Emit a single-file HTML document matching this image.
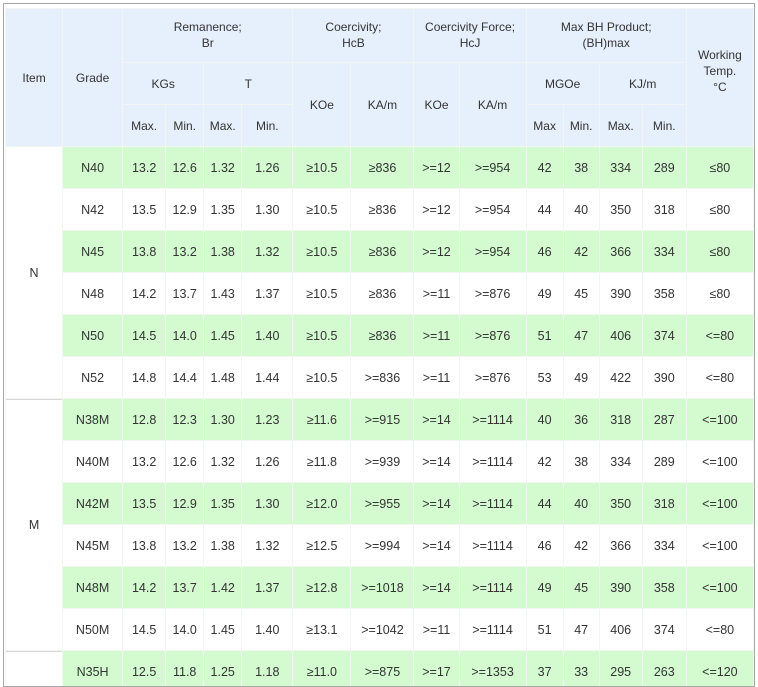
<!DOCTYPE html>
<html><head><style>
body{margin:0;background:#fff;width:758px;height:687px;overflow:hidden;font-family:"Liberation Sans",Arial,sans-serif;color:#333}
.box{position:absolute;left:3px;top:3px;width:750px;height:682px;border:1px solid #a8a8a8;overflow:hidden}
table{position:absolute;left:1px;top:4px;border-collapse:separate;border-spacing:1px;table-layout:fixed;width:749px;background:#f2f6f2}
td{text-align:center;vertical-align:middle;padding:0;font-size:12px;height:41px;overflow:hidden;white-space:nowrap}
.h td{background:#e6f0fc;line-height:16px}
tr.g td{background:#d3fbcf}
tr.w td{background:#fff}
td.it{background:#fff !important}
.d td{font-size:12.5px}
</style></head><body><div class="box">
<table>
<colgroup><col style="width:56px"><col style="width:59px"><col style="width:42px"><col style="width:37px"><col style="width:37px"><col style="width:50px"><col style="width:57px"><col style="width:62px"><col style="width:44px"><col style="width:66px"><col style="width:36px"><col style="width:35px"><col style="width:42px"><col style="width:43px"><col style="width:66px"></colgroup>
<tr class="h"><td rowspan="3">Item</td><td rowspan="3">Grade</td><td colspan="4" style="height:53px;vertical-align:top;padding-top:10px;height:43px">Remanence;<br>Br</td><td colspan="2" style="vertical-align:top;padding-top:10px">Coercivity;<br>HcB</td><td colspan="2" style="vertical-align:top;padding-top:10px">Coercivity Force;<br>HcJ</td><td colspan="4" style="vertical-align:top;padding-top:10px">Max BH Product;<br>(BH)max</td><td rowspan="3" style="padding-bottom:14px">Working<br>Temp.<br>°C</td></tr>
<tr class="h"><td colspan="2">KGs</td><td colspan="2">T</td><td rowspan="2">KOe</td><td rowspan="2">KA/m</td><td rowspan="2">KOe</td><td rowspan="2">KA/m</td><td colspan="2">MGOe</td><td colspan="2">KJ/m</td></tr>
<tr class="h"><td>Max.</td><td>Min.</td><td>Max.</td><td>Min.</td><td>Max</td><td>Min.</td><td>Max.</td><td>Min.</td></tr>
<tr class="g d"><td class="it" rowspan="6">N</td><td>N40</td><td>13.2</td><td>12.6</td><td>1.32</td><td>1.26</td><td>≥10.5</td><td>≥836</td><td>&gt;=12</td><td>&gt;=954</td><td>42</td><td>38</td><td>334</td><td>289</td><td>≤80</td></tr>
<tr class="w d"><td>N42</td><td>13.5</td><td>12.9</td><td>1.35</td><td>1.30</td><td>≥10.5</td><td>≥836</td><td>&gt;=12</td><td>&gt;=954</td><td>44</td><td>40</td><td>350</td><td>318</td><td>≤80</td></tr>
<tr class="g d"><td>N45</td><td>13.8</td><td>13.2</td><td>1.38</td><td>1.32</td><td>≥10.5</td><td>≥836</td><td>&gt;=12</td><td>&gt;=954</td><td>46</td><td>42</td><td>366</td><td>334</td><td>≤80</td></tr>
<tr class="w d"><td>N48</td><td>14.2</td><td>13.7</td><td>1.43</td><td>1.37</td><td>≥10.5</td><td>≥836</td><td>&gt;=11</td><td>&gt;=876</td><td>49</td><td>45</td><td>390</td><td>358</td><td>≤80</td></tr>
<tr class="g d"><td>N50</td><td>14.5</td><td>14.0</td><td>1.45</td><td>1.40</td><td>≥10.5</td><td>≥836</td><td>&gt;=11</td><td>&gt;=876</td><td>51</td><td>47</td><td>406</td><td>374</td><td>&lt;=80</td></tr>
<tr class="w d"><td>N52</td><td>14.8</td><td>14.4</td><td>1.48</td><td>1.44</td><td>≥10.5</td><td>&gt;=836</td><td>&gt;=11</td><td>&gt;=876</td><td>53</td><td>49</td><td>422</td><td>390</td><td>&lt;=80</td></tr>
<tr class="g d"><td class="it" rowspan="6" style="border-top:1px solid #d8d8d8">M</td><td>N38M</td><td>12.8</td><td>12.3</td><td>1.30</td><td>1.23</td><td>≥11.6</td><td>&gt;=915</td><td>&gt;=14</td><td>&gt;=1114</td><td>40</td><td>36</td><td>318</td><td>287</td><td>&lt;=100</td></tr>
<tr class="w d"><td>N40M</td><td>13.2</td><td>12.6</td><td>1.32</td><td>1.26</td><td>≥11.8</td><td>&gt;=939</td><td>&gt;=14</td><td>&gt;=1114</td><td>42</td><td>38</td><td>334</td><td>289</td><td>&lt;=100</td></tr>
<tr class="g d"><td>N42M</td><td>13.5</td><td>12.9</td><td>1.35</td><td>1.30</td><td>≥12.0</td><td>&gt;=955</td><td>&gt;=14</td><td>&gt;=1114</td><td>44</td><td>40</td><td>350</td><td>318</td><td>&lt;=100</td></tr>
<tr class="w d"><td>N45M</td><td>13.8</td><td>13.2</td><td>1.38</td><td>1.32</td><td>≥12.5</td><td>&gt;=994</td><td>&gt;=14</td><td>&gt;=1114</td><td>46</td><td>42</td><td>366</td><td>334</td><td>&lt;=100</td></tr>
<tr class="g d"><td>N48M</td><td>14.2</td><td>13.7</td><td>1.42</td><td>1.37</td><td>≥12.8</td><td>&gt;=1018</td><td>&gt;=14</td><td>&gt;=1114</td><td>49</td><td>45</td><td>390</td><td>358</td><td>&lt;=100</td></tr>
<tr class="w d"><td>N50M</td><td>14.5</td><td>14.0</td><td>1.45</td><td>1.40</td><td>≥13.1</td><td>&gt;=1042</td><td>&gt;=11</td><td>&gt;=1114</td><td>51</td><td>47</td><td>406</td><td>374</td><td>&lt;=80</td></tr>
<tr class="g d"><td class="it" style="border-top:1px solid #d8d8d8"></td><td>N35H</td><td>12.5</td><td>11.8</td><td>1.25</td><td>1.18</td><td>≥11.0</td><td>&gt;=875</td><td>&gt;=17</td><td>&gt;=1353</td><td>37</td><td>33</td><td>295</td><td>263</td><td>&lt;=120</td></tr>
</table></div></body></html>
